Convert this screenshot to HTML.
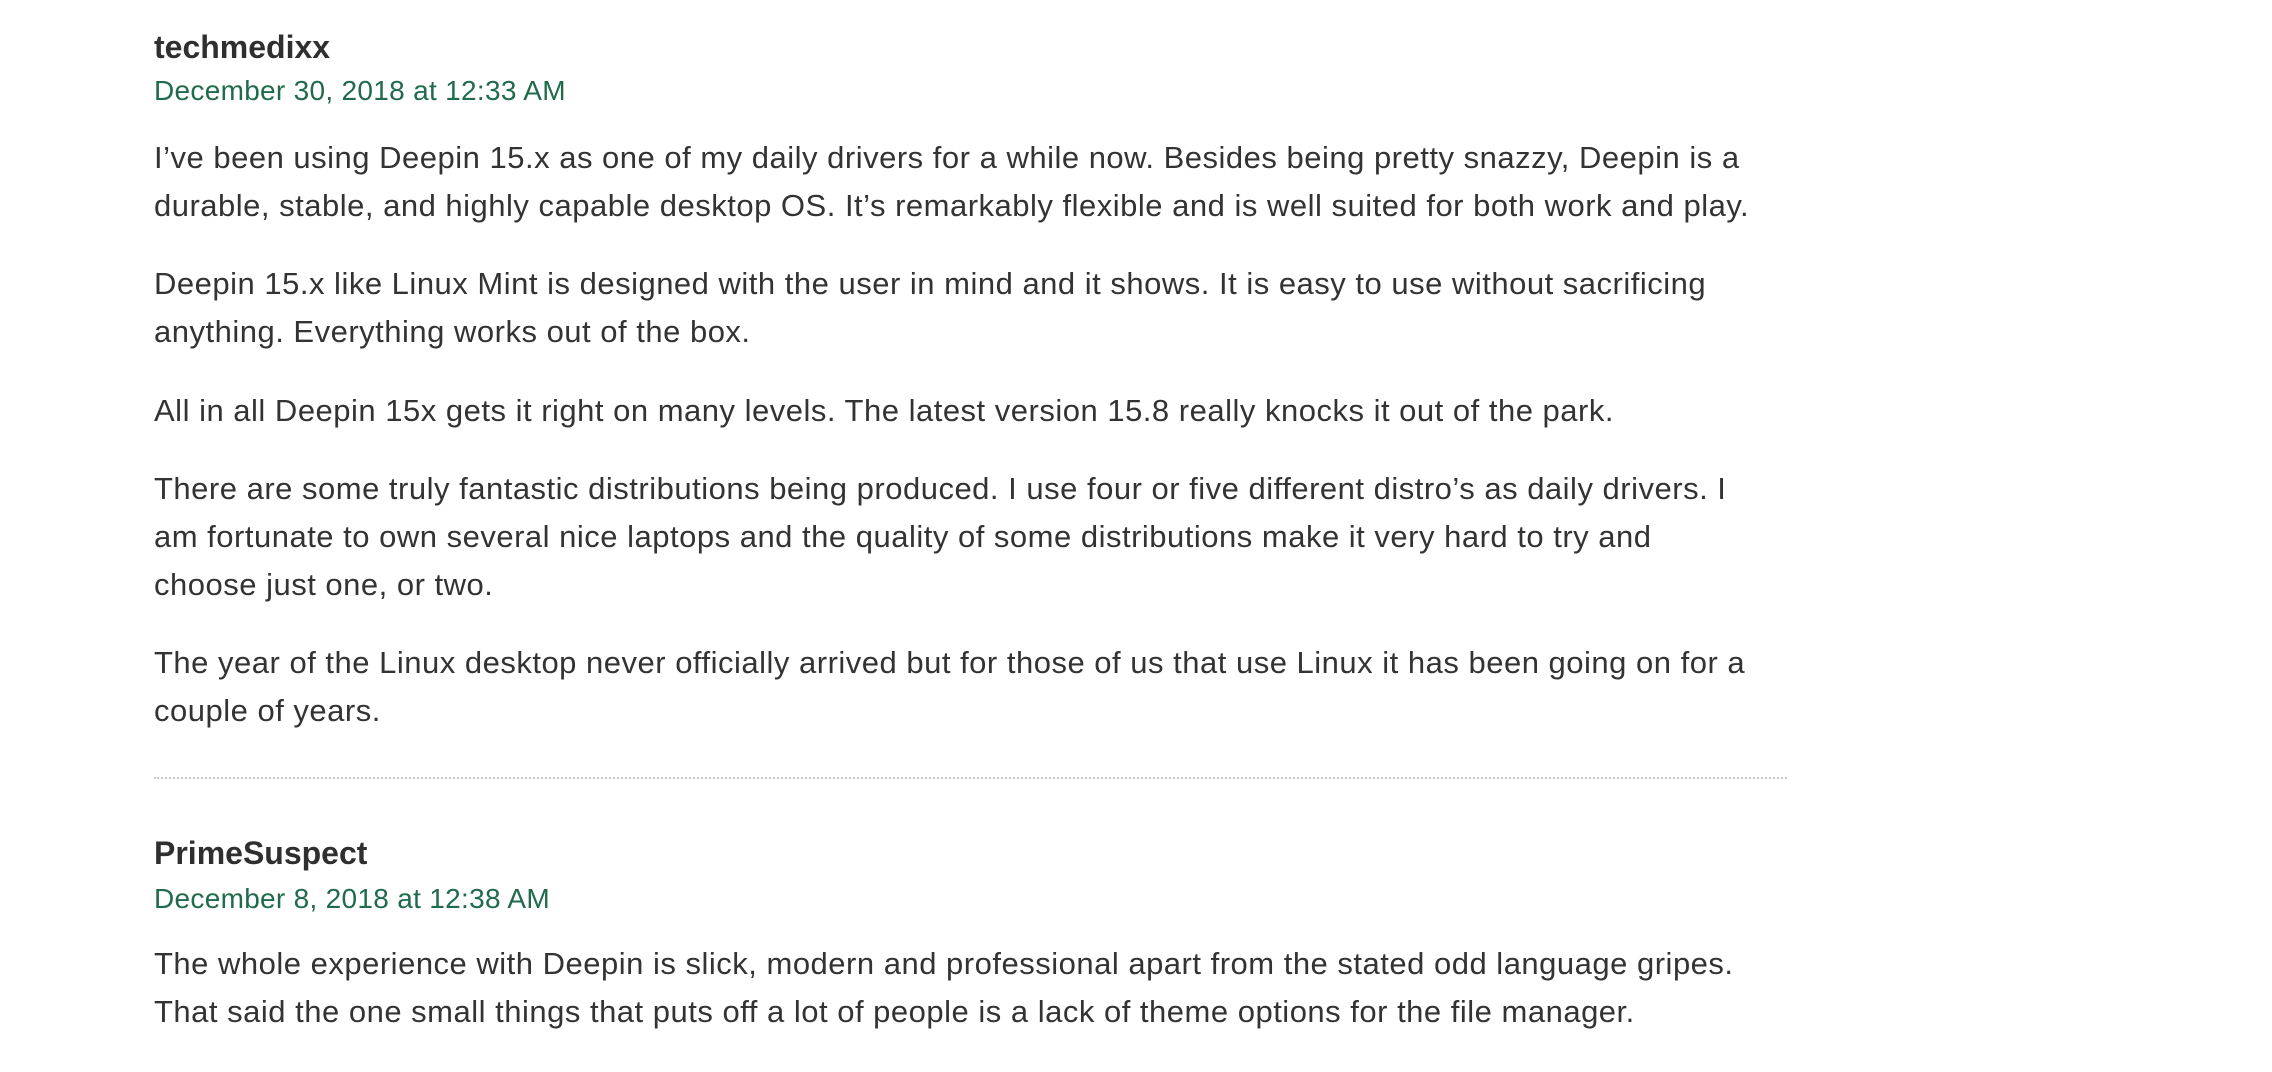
<!DOCTYPE html>
<html><head><meta charset="utf-8"><style>
html,body{margin:0;padding:0;background:#fff;width:2272px;height:1072px;overflow:hidden}
body{font-family:"Liberation Sans",sans-serif;color:#333}
.n{position:absolute;left:154px;font-weight:bold;font-size:32px;white-space:nowrap;color:#2f2f2f}
.d{position:absolute;left:154px;font-size:28px;letter-spacing:0.3px;color:#1f6b4b;white-space:nowrap}
.p{position:absolute;left:154px;font-size:31px;letter-spacing:0.5px;line-height:48px;white-space:nowrap;color:#333}
.hr{position:absolute;left:154px;width:1633px;top:777px;border-top:2px dotted #c8c8c8}
</style></head><body>
<div class="n" style="top:29px">techmedixx</div>
<div class="d" style="top:75px">December 30, 2018 at 12:33 AM</div>
<div class="p" style="top:134px">I’ve been using Deepin 15.x as one of my daily drivers for a while now. Besides being pretty snazzy, Deepin is a<br>durable, stable, and highly capable desktop OS. It’s remarkably flexible and is well suited for both work and play.</div>
<div class="p" style="top:260px">Deepin 15.x like Linux Mint is designed with the user in mind and it shows. It is easy to use without sacrificing<br>anything. Everything works out of the box.</div>
<div class="p" style="top:387px">All in all Deepin 15x gets it right on many levels. The latest version 15.8 really knocks it out of the park.</div>
<div class="p" style="top:465px">There are some truly fantastic distributions being produced. I use four or five different distro’s as daily drivers. I<br>am fortunate to own several nice laptops and the quality of some distributions make it very hard to try and<br>choose just one, or two.</div>
<div class="p" style="top:639px">The year of the Linux desktop never officially arrived but for those of us that use Linux it has been going on for a<br>couple of years.</div>
<div class="hr"></div>
<div class="n" style="top:835px">PrimeSuspect</div>
<div class="d" style="top:883px">December 8, 2018 at 12:38 AM</div>
<div class="p" style="top:940px">The whole experience with Deepin is slick, modern and professional apart from the stated odd language gripes.<br>That said the one small things that puts off a lot of people is a lack of theme options for the file manager.</div>
</body></html>
